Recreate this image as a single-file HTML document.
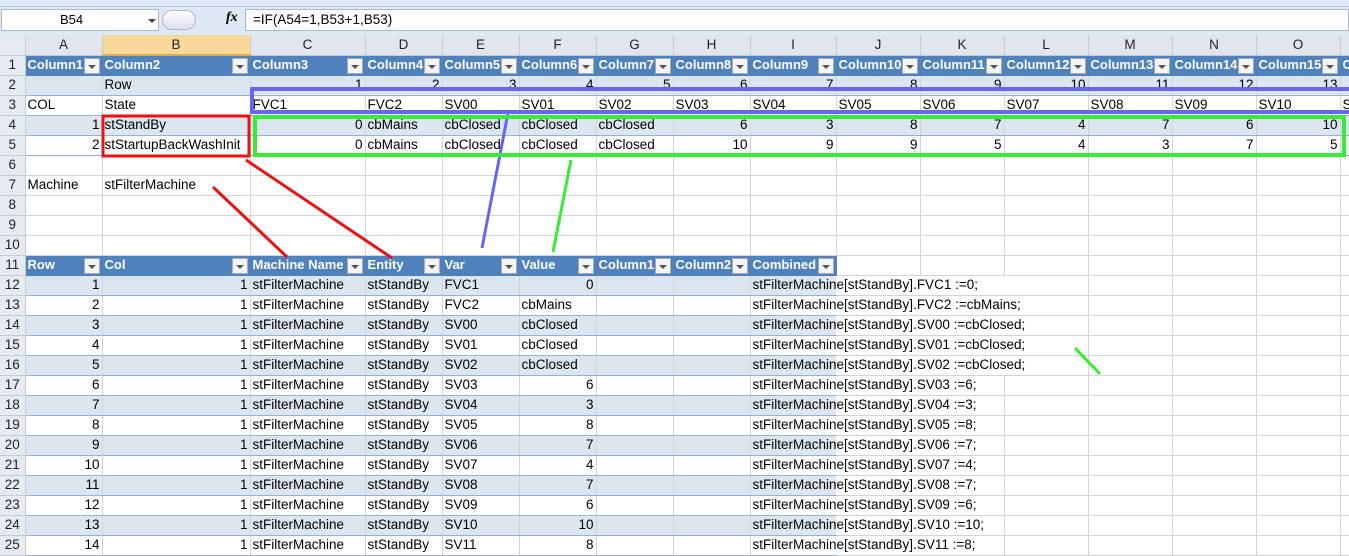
<!DOCTYPE html>
<html><head><meta charset="utf-8"><style>
*{margin:0;padding:0;box-sizing:border-box}
body{width:1349px;height:555px;overflow:hidden;background:#fff;font-family:"Liberation Sans",sans-serif;font-size:13.5px;color:#000;position:relative}
#rib{position:absolute;left:0;top:0;width:1349px;height:7px;background:#dfe8f5;border-bottom:1px solid #b6c6dc}
#fb{position:absolute;left:0;top:7px;width:1349px;height:28px;background:#dfe8f5}
#nb{position:absolute;left:1px;top:2px;width:158px;height:22px;background:#fff;border:1px solid #a8b8d0;font-size:13px;line-height:20px;padding-left:58px}
#nb:after{content:"";position:absolute;left:146px;top:9px;border:4px solid transparent;border-top:4px solid #444}
#knob{position:absolute;left:162px;top:3px;width:34px;height:20px;border-radius:10px;background:linear-gradient(#fff,#dde);border:1px solid #b0b8c8}
#fx{position:absolute;left:226px;top:3px;font-family:"Liberation Serif",serif;font-style:italic;font-weight:bold;font-size:14px}
#ff{position:absolute;left:245px;top:2px;width:1104px;height:22px;background:#fff;border:1px solid #a8b8d0;line-height:20px;padding-left:7px;font-size:13.5px}
table{position:absolute;left:0;top:35px;border-collapse:collapse;table-layout:fixed;width:1360px}
tr{height:20px}
td{height:20px;border-right:1px solid #d4d4d4;border-bottom:1px solid #d4d4d4;padding:0 2px;white-space:nowrap;overflow:visible;position:relative;line-height:18px}
.ch td{background:#e1e6ee;text-align:center;color:#222;border-color:#c5cad3;font-size:13.5px}
.ch td.sel{background:#f8d99a;border-bottom:2px solid #e7a73a}
td.rh{background:#e6ebf2;text-align:center;color:#222;border-color:#c5cad3;padding:0;font-size:13.5px}
.r{text-align:right}
.b{background:#dce6f1;border-bottom-color:#95b3d7}
.w{border-bottom-color:#95b3d7}
.h{background:#4f81bd;color:#fff;font-weight:bold;font-size:13px;border-right-color:#4f81bd;border-bottom-color:#4f81bd}
.h i{position:absolute;right:2px;top:2px;width:16px;height:16px;background:#f4f4f4;border:1px solid #aab}
.h i:after{content:"";position:absolute;left:3px;top:6px;border:4px solid transparent;border-top:4px solid #555}
.n{border-right-color:transparent}
svg{position:absolute;left:0;top:0}
</style></head><body>
<div id="rib"></div>
<div id="fb"><div id="nb">B54</div><div id="knob"></div><div id="fx">fx</div><div id="ff">=IF(A54=1,B53+1,B53)</div></div>
<table>
<colgroup><col style="width:25px"><col style="width:77px"><col style="width:148px"><col style="width:115px"><col style="width:77px"><col style="width:77px"><col style="width:77px"><col style="width:77px"><col style="width:77px"><col style="width:86px"><col style="width:84px"><col style="width:84px"><col style="width:84px"><col style="width:84px"><col style="width:84px"><col style="width:84px"><col style="width:20px"></colgroup>
<tr class="ch"><td class="rh"></td><td>A</td><td class="sel">B</td><td>C</td><td>D</td><td>E</td><td>F</td><td>G</td><td>H</td><td>I</td><td>J</td><td>K</td><td>L</td><td>M</td><td>N</td><td>O</td><td></td></tr>
<tr><td class="rh">1</td><td class="h">Column1<i></i></td><td class="h">Column2<i></i></td><td class="h">Column3<i></i></td><td class="h">Column4<i></i></td><td class="h">Column5<i></i></td><td class="h">Column6<i></i></td><td class="h">Column7<i></i></td><td class="h">Column8<i></i></td><td class="h">Column9<i></i></td><td class="h">Column10<i></i></td><td class="h">Column11<i></i></td><td class="h">Column12<i></i></td><td class="h">Column13<i></i></td><td class="h">Column14<i></i></td><td class="h">Column15<i></i></td><td class="h">C</td></tr>
<tr><td class="rh">2</td><td class="b"></td><td class="b">Row</td><td class="b r">1</td><td class="b r">2</td><td class="b r">3</td><td class="b r">4</td><td class="b r">5</td><td class="b r">6</td><td class="b r">7</td><td class="b r">8</td><td class="b r">9</td><td class="b r">10</td><td class="b r">11</td><td class="b r">12</td><td class="b r">13</td><td class="b"></td></tr>
<tr><td class="rh">3</td><td class="w">COL</td><td class="w">State</td><td class="w">FVC1</td><td class="w">FVC2</td><td class="w">SV00</td><td class="w">SV01</td><td class="w">SV02</td><td class="w">SV03</td><td class="w">SV04</td><td class="w">SV05</td><td class="w">SV06</td><td class="w">SV07</td><td class="w">SV08</td><td class="w">SV09</td><td class="w">SV10</td><td class="w">S</td></tr>
<tr><td class="rh">4</td><td class="b r">1</td><td class="b">stStandBy</td><td class="b r">0</td><td class="b">cbMains</td><td class="b">cbClosed</td><td class="b">cbClosed</td><td class="b">cbClosed</td><td class="b r">6</td><td class="b r">3</td><td class="b r">8</td><td class="b r">7</td><td class="b r">4</td><td class="b r">7</td><td class="b r">6</td><td class="b r">10</td><td class="b"></td></tr>
<tr><td class="rh">5</td><td class="w r">2</td><td class="w">stStartupBackWashInit</td><td class="w r">0</td><td class="w">cbMains</td><td class="w">cbClosed</td><td class="w">cbClosed</td><td class="w">cbClosed</td><td class="w r">10</td><td class="w r">9</td><td class="w r">9</td><td class="w r">5</td><td class="w r">4</td><td class="w r">3</td><td class="w r">7</td><td class="w r">5</td><td class="w"></td></tr>
<tr><td class="rh">6</td><td></td><td></td><td></td><td></td><td></td><td></td><td></td><td></td><td></td><td></td><td></td><td></td><td></td><td></td><td></td><td></td></tr>
<tr><td class="rh">7</td><td>Machine</td><td>stFilterMachine</td><td></td><td></td><td></td><td></td><td></td><td></td><td></td><td></td><td></td><td></td><td></td><td></td><td></td><td></td></tr>
<tr><td class="rh">8</td><td></td><td></td><td></td><td></td><td></td><td></td><td></td><td></td><td></td><td></td><td></td><td></td><td></td><td></td><td></td><td></td></tr>
<tr><td class="rh">9</td><td></td><td></td><td></td><td></td><td></td><td></td><td></td><td></td><td></td><td></td><td></td><td></td><td></td><td></td><td></td><td></td></tr>
<tr><td class="rh">10</td><td></td><td></td><td></td><td></td><td></td><td></td><td></td><td></td><td></td><td></td><td></td><td></td><td></td><td></td><td></td><td></td></tr>
<tr><td class="rh">11</td><td class="h">Row<i></i></td><td class="h">Col<i></i></td><td class="h">Machine Name<i></i></td><td class="h">Entity<i></i></td><td class="h">Var<i></i></td><td class="h">Value<i></i></td><td class="h">Column1<i></i></td><td class="h">Column2<i></i></td><td class="h">Combined<i></i></td><td></td><td></td><td></td><td></td><td></td><td></td><td></td></tr>
<tr><td class="rh">12</td><td class="b r">1</td><td class="b r">1</td><td class="b">stFilterMachine</td><td class="b">stStandBy</td><td class="b">FVC1</td><td class="b r">0</td><td class="b"></td><td class="b"></td><td class="b n">stFilterMachine[stStandBy].FVC1 :=0;</td><td class="n"></td><td class="n"></td><td></td><td></td><td></td><td></td><td></td></tr>
<tr><td class="rh">13</td><td class="w r">2</td><td class="w r">1</td><td class="w">stFilterMachine</td><td class="w">stStandBy</td><td class="w">FVC2</td><td class="w">cbMains</td><td class="w"></td><td class="w"></td><td class="w n">stFilterMachine[stStandBy].FVC2 :=cbMains;</td><td class="n"></td><td class="n"></td><td></td><td></td><td></td><td></td><td></td></tr>
<tr><td class="rh">14</td><td class="b r">3</td><td class="b r">1</td><td class="b">stFilterMachine</td><td class="b">stStandBy</td><td class="b">SV00</td><td class="b">cbClosed</td><td class="b"></td><td class="b"></td><td class="b n">stFilterMachine[stStandBy].SV00 :=cbClosed;</td><td class="n"></td><td class="n"></td><td></td><td></td><td></td><td></td><td></td></tr>
<tr><td class="rh">15</td><td class="w r">4</td><td class="w r">1</td><td class="w">stFilterMachine</td><td class="w">stStandBy</td><td class="w">SV01</td><td class="w">cbClosed</td><td class="w"></td><td class="w"></td><td class="w n">stFilterMachine[stStandBy].SV01 :=cbClosed;</td><td class="n"></td><td class="n"></td><td></td><td></td><td></td><td></td><td></td></tr>
<tr><td class="rh">16</td><td class="b r">5</td><td class="b r">1</td><td class="b">stFilterMachine</td><td class="b">stStandBy</td><td class="b">SV02</td><td class="b">cbClosed</td><td class="b"></td><td class="b"></td><td class="b n">stFilterMachine[stStandBy].SV02 :=cbClosed;</td><td class="n"></td><td class="n"></td><td></td><td></td><td></td><td></td><td></td></tr>
<tr><td class="rh">17</td><td class="w r">6</td><td class="w r">1</td><td class="w">stFilterMachine</td><td class="w">stStandBy</td><td class="w">SV03</td><td class="w r">6</td><td class="w"></td><td class="w"></td><td class="w n">stFilterMachine[stStandBy].SV03 :=6;</td><td class="n"></td><td></td><td></td><td></td><td></td><td></td><td></td></tr>
<tr><td class="rh">18</td><td class="b r">7</td><td class="b r">1</td><td class="b">stFilterMachine</td><td class="b">stStandBy</td><td class="b">SV04</td><td class="b r">3</td><td class="b"></td><td class="b"></td><td class="b n">stFilterMachine[stStandBy].SV04 :=3;</td><td class="n"></td><td></td><td></td><td></td><td></td><td></td><td></td></tr>
<tr><td class="rh">19</td><td class="w r">8</td><td class="w r">1</td><td class="w">stFilterMachine</td><td class="w">stStandBy</td><td class="w">SV05</td><td class="w r">8</td><td class="w"></td><td class="w"></td><td class="w n">stFilterMachine[stStandBy].SV05 :=8;</td><td class="n"></td><td></td><td></td><td></td><td></td><td></td><td></td></tr>
<tr><td class="rh">20</td><td class="b r">9</td><td class="b r">1</td><td class="b">stFilterMachine</td><td class="b">stStandBy</td><td class="b">SV06</td><td class="b r">7</td><td class="b"></td><td class="b"></td><td class="b n">stFilterMachine[stStandBy].SV06 :=7;</td><td class="n"></td><td></td><td></td><td></td><td></td><td></td><td></td></tr>
<tr><td class="rh">21</td><td class="w r">10</td><td class="w r">1</td><td class="w">stFilterMachine</td><td class="w">stStandBy</td><td class="w">SV07</td><td class="w r">4</td><td class="w"></td><td class="w"></td><td class="w n">stFilterMachine[stStandBy].SV07 :=4;</td><td class="n"></td><td></td><td></td><td></td><td></td><td></td><td></td></tr>
<tr><td class="rh">22</td><td class="b r">11</td><td class="b r">1</td><td class="b">stFilterMachine</td><td class="b">stStandBy</td><td class="b">SV08</td><td class="b r">7</td><td class="b"></td><td class="b"></td><td class="b n">stFilterMachine[stStandBy].SV08 :=7;</td><td class="n"></td><td></td><td></td><td></td><td></td><td></td><td></td></tr>
<tr><td class="rh">23</td><td class="w r">12</td><td class="w r">1</td><td class="w">stFilterMachine</td><td class="w">stStandBy</td><td class="w">SV09</td><td class="w r">6</td><td class="w"></td><td class="w"></td><td class="w n">stFilterMachine[stStandBy].SV09 :=6;</td><td class="n"></td><td></td><td></td><td></td><td></td><td></td><td></td></tr>
<tr><td class="rh">24</td><td class="b r">13</td><td class="b r">1</td><td class="b">stFilterMachine</td><td class="b">stStandBy</td><td class="b">SV10</td><td class="b r">10</td><td class="b"></td><td class="b"></td><td class="b n">stFilterMachine[stStandBy].SV10 :=10;</td><td class="n"></td><td></td><td></td><td></td><td></td><td></td><td></td></tr>
<tr><td class="rh">25</td><td class="w r">14</td><td class="w r">1</td><td class="w">stFilterMachine</td><td class="w">stStandBy</td><td class="w">SV11</td><td class="w r">8</td><td class="w"></td><td class="w"></td><td class="w n">stFilterMachine[stStandBy].SV11 :=8;</td><td class="n"></td><td></td><td></td><td></td><td></td><td></td><td></td></tr>
</table>
<svg width="1349" height="555">
<rect x="252" y="89" width="1110" height="23" fill="none" stroke="#6666f2" stroke-width="4"/>
<line x1="508" y1="113" x2="482" y2="248" stroke="#6666f2" stroke-width="3"/>
<rect x="255" y="117" width="1089" height="38" fill="none" stroke="#33ee33" stroke-width="4"/>
<line x1="571" y1="160" x2="553" y2="252" stroke="#33ee33" stroke-width="3"/>
<rect x="103" y="116" width="146" height="40" fill="none" stroke="#ee1111" stroke-width="3"/>
<line x1="246" y1="160" x2="392" y2="258" stroke="#ee1111" stroke-width="3"/>
<line x1="213" y1="187" x2="287" y2="257" stroke="#ee1111" stroke-width="3"/>
<line x1="1075" y1="348" x2="1100" y2="374" stroke="#33ee33" stroke-width="3"/>
</svg>
</body></html>
